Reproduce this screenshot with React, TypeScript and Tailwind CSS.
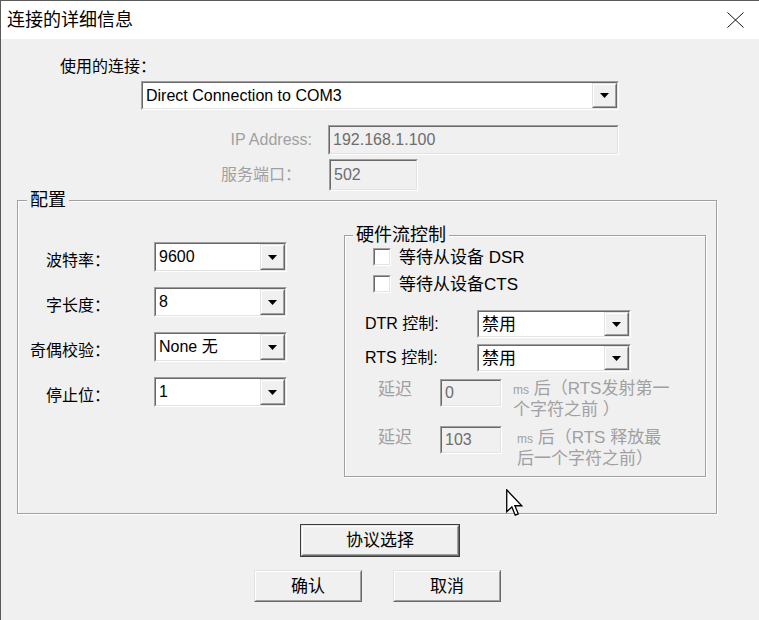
import type { ReactNode } from 'react'

// classic win32 sunken edge (edit boxes, combo boxes, checkboxes)
function Sunken({ className = '', inner = '', children }: { className?: string; inner?: string; children?: ReactNode }) {
  return (
    <div className={`border border-t-[#a0a0a0] border-l-[#a0a0a0] border-b-white border-r-white ${className}`}>
      <div className={`h-full w-full border border-t-[#696969] border-l-[#696969] border-b-[#e3e3e3] border-r-[#e3e3e3] ${inner}`}>
        {children}
      </div>
    </div>
  )
}

function Raised({ className = '', inner = '', children }: { className?: string; inner?: string; children?: ReactNode }) {
  return (
    <div className={`border border-t-[#e3e3e3] border-l-[#e3e3e3] border-b-[#696969] border-r-[#696969] ${className}`}>
      <div className={`h-full w-full border border-t-white border-l-white border-b-[#a0a0a0] border-r-[#a0a0a0] bg-[#f0f0f0] ${inner}`}>
        {children}
      </div>
    </div>
  )
}

function Combo({ value, className = '' }: { value: string; className?: string }) {
  return (
    <Sunken className={className} inner="flex bg-white">
      <div className="flex flex-1 items-center pl-[3px] leading-none">{value}</div>
      <Raised className="h-full w-[25px]" inner="flex items-center justify-center">
        <svg width="9" height="5" viewBox="0 0 9 5">
          <polygon points="0,0 9,0 4.5,5" fill="#000" />
        </svg>
      </Raised>
    </Sunken>
  )
}

function Edit({ value, className = '' }: { value: string; className?: string }) {
  return (
    <Sunken className={className} inner="flex items-center bg-[#f0f0f0] pl-[3px] text-[#6d6d6d] leading-none">
      {value}
    </Sunken>
  )
}

function Check({ label }: { label: string }) {
  return (
    <div className="flex h-[18px] items-center pl-[28px]">
      <Sunken className="h-[18px] w-[18px]" inner="bg-white" />
      <span className="ml-[8px] text-[17px] leading-none">{label}</span>
    </div>
  )
}

function Button({ children, className = '', isDefault = false }: { children: ReactNode; className?: string; isDefault?: boolean }) {
  const btn = (
    <Raised className="h-full w-full" inner="flex items-center justify-center leading-none">
      {children}
    </Raised>
  )
  if (isDefault) return <div className={`border border-[#3c3c3c] ${className}`}>{btn}</div>
  return <div className={className}>{btn}</div>
}

const configRows = [
  { label: '波特率：', value: '9600' },
  { label: '字长度：', value: '8' },
  { label: '奇偶校验：', value: 'None 无' },
  { label: '停止位：', value: '1' },
]

export default function App() {
  return (
    <div className="relative h-[620px] w-[759px] overflow-hidden border-l border-t border-[#5a5a5a] bg-[#f0f0f0] font-['Liberation_Sans','Noto_Sans_CJK_SC',sans-serif] text-[16px] text-black">
      {/* title bar */}
      <div className="flex h-[38px] items-center justify-between bg-white pl-[6px] pr-[15px]">
        <span className="text-[18px] leading-none">连接的详细信息</span>
        <svg width="17" height="16" viewBox="0 0 17 16">
          <path d="M0.5 0.5 L16.5 15.5 M16.5 0.5 L0.5 15.5" stroke="#111" strokeWidth="1" fill="none" />
        </svg>
      </div>

      {/* connection */}
      <div className="pl-[59px] pt-[17px] leading-[22px]">使用的连接：</div>
      <Combo value="Direct Connection to COM3" className="ml-[140px] mt-[3px] h-[29px] w-[478px]" />

      <div className="mt-[15px] flex items-center">
        <span className="w-[311px] text-right text-[#a0a0a0]">IP Address:</span>
        <Edit value="192.168.1.100" className="ml-[16px] h-[30px] w-[291px]" />
      </div>
      <div className="mt-[4px] flex items-center">
        <span className="w-[300px] text-right text-[#a0a0a0]">服务端口：</span>
        <Edit value="502" className="ml-[28px] h-[32px] w-[89px]" />
      </div>

      {/* 配置 group */}
      <fieldset className="ml-[16px] h-[323px] w-[700px] border border-[#a0a0a0] shadow-[1px_1px_0_#fff,inset_1px_1px_0_#fff]">
        <legend className="ml-[9px] bg-[#f0f0f0] px-[3px] text-[18px] leading-[18px]">配置</legend>
        <div className="flex items-start">
          <div className="flex w-[269px] flex-col gap-[15px] pt-[33px]">
            {configRows.map(r => (
              <div key={r.label} className="flex h-[30px] items-center">
                <span className="mt-[8px] w-[92px] text-right">{r.label}</span>
                <Combo value={r.value} className="ml-[44px] h-[30px] w-[133px]" />
              </div>
            ))}
          </div>

          {/* 硬件流控制 group */}
          <fieldset className="ml-[57px] mt-[17px] h-[251px] w-[362px] border border-[#a0a0a0] shadow-[1px_1px_0_#fff,inset_1px_1px_0_#fff]">
            <legend className="ml-[8px] bg-[#f0f0f0] px-[3px] text-[18px] leading-[18px]">硬件流控制</legend>
            <div className="mt-[4px]">
              <Check label="等待从设备 DSR" />
            </div>
            <div className="mt-[9px]">
              <Check label="等待从设备CTS" />
            </div>

            <div className="mt-[17px] flex items-center pl-[20px]">
              <span className="w-[112px]">DTR 控制:</span>
              <Combo value="禁用" className="h-[28px] w-[154px] text-[17px]" />
            </div>
            <div className="mt-[6px] flex items-center pl-[20px]">
              <span className="w-[112px]">RTS 控制:</span>
              <Combo value="禁用" className="h-[28px] w-[154px] text-[17px]" />
            </div>

            <div className="mt-[7px] flex items-start pl-[33px] text-[#a0a0a0]">
              <span className="mt-[1px] w-[62px] text-[17px] leading-[20px]">延迟</span>
              <Edit value="0" className="h-[28px] w-[62px]" />
              <div className="ml-[11px] text-[17px] leading-[20px]">
                <span className="text-[12px]">ms</span> 后（RTS发射第一
                <br />
                个字符之前 ）
              </div>
            </div>
            <div className="mt-[6px] flex items-start pl-[33px] text-[#a0a0a0]">
              <span className="mt-[2px] w-[62px] text-[17px] leading-[20px]">延迟</span>
              <Edit value="103" className="h-[28px] w-[62px]" />
              <div className="ml-[15px] mt-[2px] text-[17px] leading-[20px]">
                <span className="text-[12px]">ms</span> 后（RTS 释放最
                <br />
                后一个字符之前）
              </div>
            </div>
          </fieldset>
        </div>
      </fieldset>

      {/* buttons */}
      <Button isDefault className="mx-auto mt-[10px] h-[33px] w-[160px] text-[17px]">协议选择</Button>
      <div className="mt-[13px] flex gap-[31px] pl-[253px] text-[17px]">
        <Button className="h-[32px] w-[108px]">确认</Button>
        <Button className="h-[32px] w-[108px]">取消</Button>
      </div>

      {/* mouse pointer */}
      <svg className="absolute left-[505px] top-[488px]" width="19" height="28" viewBox="0 0 13 19">
        <path d="M0.5 0.5 L0.5 15.5 L4 12.2 L6.3 17.8 L8.4 16.9 L6.1 11.4 L10.8 11.4 Z" fill="#fff" stroke="#000" strokeWidth="0.9" strokeLinejoin="miter" />
      </svg>
    </div>
  )
}
